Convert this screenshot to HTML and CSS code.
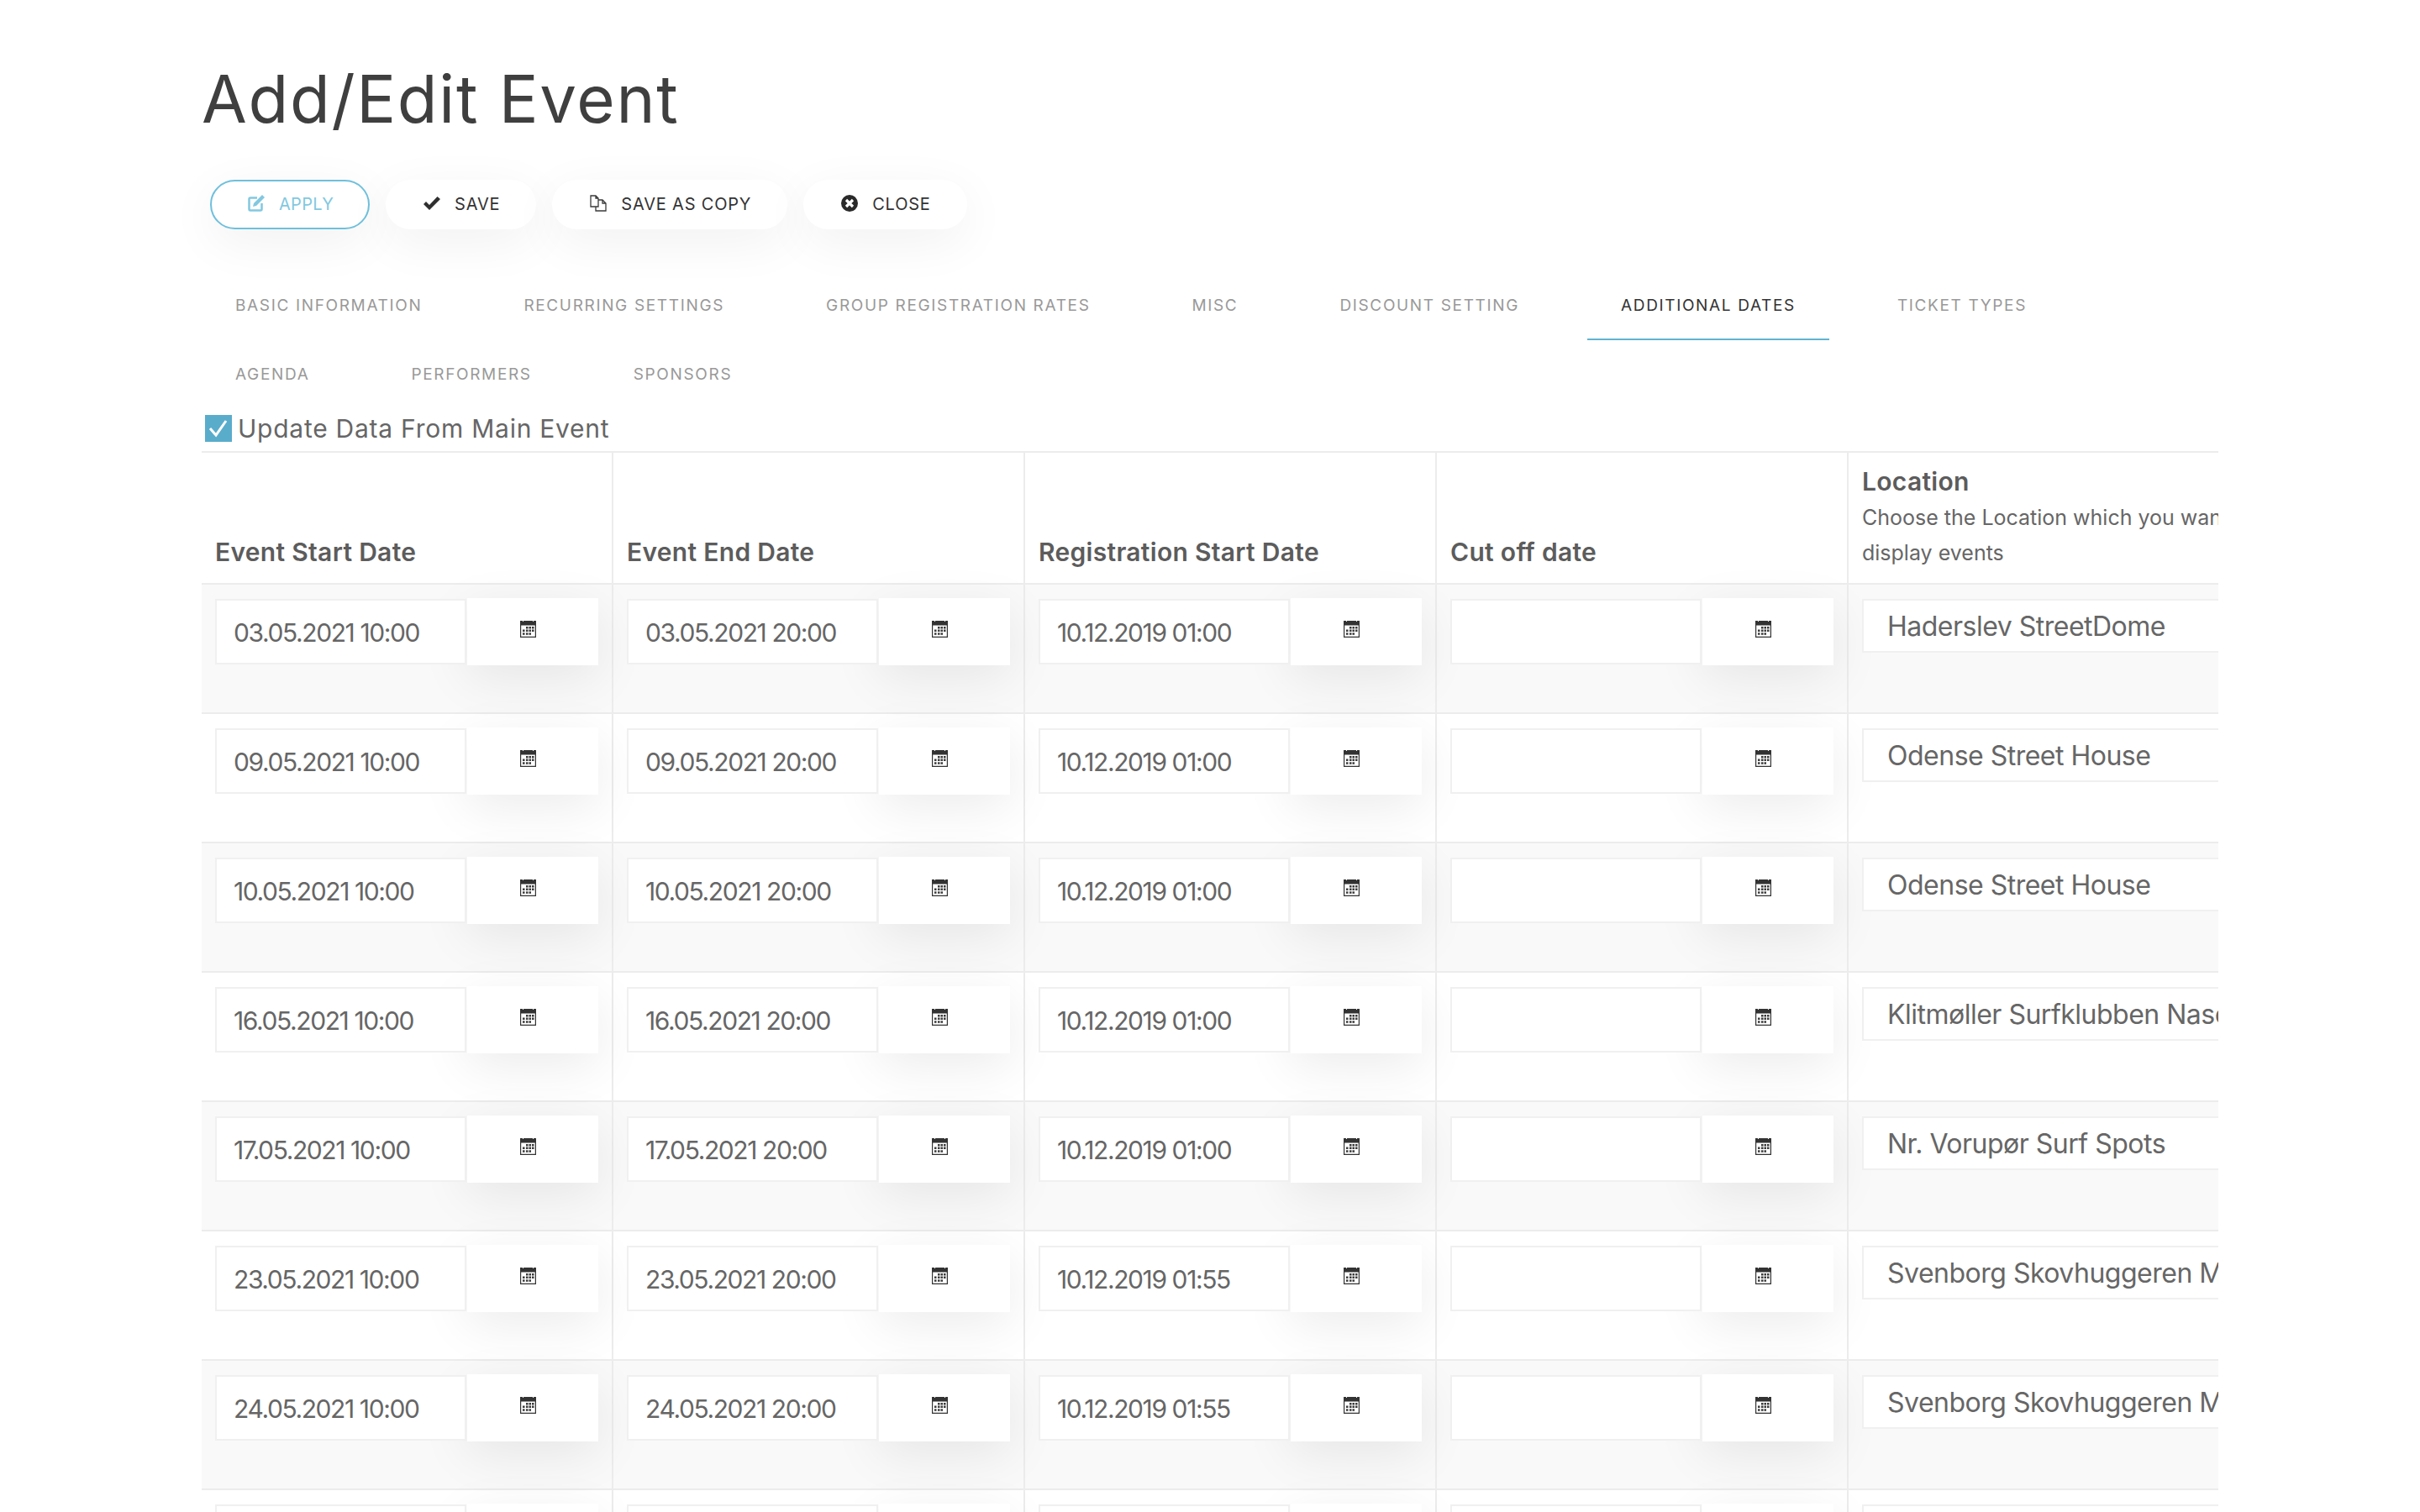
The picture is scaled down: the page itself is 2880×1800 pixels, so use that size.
FILE: index.html
```html
<!DOCTYPE html>
<html lang="en">
<head>
<meta charset="utf-8">
<title>Add/Edit Event</title>
<link rel="stylesheet" href="styles.css">
</head>
<body>
<svg class="defs" width="0" height="0" aria-hidden="true">
  <symbol id="cal" viewBox="0 0 19 21">
    <path fill="#333" fill-rule="evenodd" d="M0 1h3v1h1V1h11v1h1V1h3v20H0zM1.200 6.500v13.300h16.600V6.500z"/>
    <g fill="#3a3a3a"><rect x="7" y="8" width="2.500" height="2.500"/><rect x="10.500" y="8" width="2.500" height="2.500"/><rect x="14" y="8" width="2.500" height="2.500"/><rect x="3" y="11.500" width="2.500" height="2.500"/><rect x="7" y="11.500" width="2.500" height="2.500"/><rect x="10.500" y="11.500" width="2.500" height="2.500"/><rect x="14" y="11.500" width="2.500" height="2.500"/><rect x="3" y="15.300" width="2.500" height="2.500"/><rect x="7" y="15.300" width="2.500" height="2.500"/><rect x="10.500" y="15.300" width="2.500" height="2.500"/></g>
  </symbol>
</svg>
<main class="page">
  <h1 class="title">Add/Edit Event</h1>
  <div class="toolbar">
    <a class="btn btn-primary"><svg class="ico" viewBox="0 0 20 20"><path fill="none" stroke="currentColor" stroke-width="2.500" d="M11 3.500H3a1.500 1.500 0 0 0-1.500 1.500v12A1.500 1.500 0 0 0 3 18.500h12a1.500 1.500 0 0 0 1.500-1.500V10"/><path fill="currentColor" d="M17 0l3 3L10 13l-4 1 1-4z"/></svg>APPLY</a>
    <a class="btn"><svg class="ico" viewBox="0 0 20 16"><path fill="#2f2f2f" d="M0 9l3-3 4 4 9.500-10L20 3 7 16z"/></svg>SAVE</a>
    <a class="btn"><svg class="ico" viewBox="0 0 20 20"><path fill="none" stroke="#3a3a3a" stroke-width="1.300" d="M1 1h6l3 3v10H1zM7 1v3h3M10 6h5l4 4v9H7v-5M15 6v4h4"/></svg>SAVE AS COPY</a>
    <a class="btn"><svg class="ico" viewBox="0 0 20 20"><circle cx="10" cy="10" r="10" fill="#2a2a2a"/><path stroke="#fff" stroke-width="3.200" d="M6 6l8 8M14 6l-8 8"/></svg>CLOSE</a>
  </div>
  <nav class="tabs">
    <a class="tab">BASIC INFORMATION</a>
    <a class="tab">RECURRING SETTINGS</a>
    <a class="tab">GROUP REGISTRATION RATES</a>
    <a class="tab">MISC</a>
    <a class="tab">DISCOUNT SETTING</a>
    <a class="tab tab-active">ADDITIONAL DATES</a>
    <a class="tab">TICKET TYPES</a>
    <a class="tab">AGENDA</a>
    <a class="tab">PERFORMERS</a>
    <a class="tab">SPONSORS</a>
  </nav>
  <label class="check">
    <svg class="check-box" viewBox="0 0 32 32"><rect width="32" height="32" fill="#5aaccb"/><path fill="none" stroke="#fff" stroke-width="3" d="M6 16l7 8L25 7"/></svg>
    Update Data From Main Event
  </label>
  <div class="table-wrap">
    <div class="table">
      <div class="row head">
        <div class="cell"><span class="th">Event Start Date</span></div>
        <div class="cell"><span class="th">Event End Date</span></div>
        <div class="cell"><span class="th">Registration Start Date</span></div>
        <div class="cell"><span class="th">Cut off date</span></div>
        <div class="cell cell-loc"><span class="th">Location</span><span class="hint">Choose the Location which you want to display events</span></div>
      </div>
      <div class="row">
        <div class="cell"><div class="field"><div class="input">03.05.2021 10:00</div><div class="cal"><svg class="cal-ico"><use href="#cal"/></svg></div></div></div>
        <div class="cell"><div class="field"><div class="input">03.05.2021 20:00</div><div class="cal"><svg class="cal-ico"><use href="#cal"/></svg></div></div></div>
        <div class="cell"><div class="field"><div class="input">10.12.2019 01:00</div><div class="cal"><svg class="cal-ico"><use href="#cal"/></svg></div></div></div>
        <div class="cell"><div class="field"><div class="input"></div><div class="cal"><svg class="cal-ico"><use href="#cal"/></svg></div></div></div>
        <div class="cell cell-loc"><div class="select">Haderslev StreetDome</div></div>
      </div>
      <div class="row">
        <div class="cell"><div class="field"><div class="input">09.05.2021 10:00</div><div class="cal"><svg class="cal-ico"><use href="#cal"/></svg></div></div></div>
        <div class="cell"><div class="field"><div class="input">09.05.2021 20:00</div><div class="cal"><svg class="cal-ico"><use href="#cal"/></svg></div></div></div>
        <div class="cell"><div class="field"><div class="input">10.12.2019 01:00</div><div class="cal"><svg class="cal-ico"><use href="#cal"/></svg></div></div></div>
        <div class="cell"><div class="field"><div class="input"></div><div class="cal"><svg class="cal-ico"><use href="#cal"/></svg></div></div></div>
        <div class="cell cell-loc"><div class="select">Odense Street House</div></div>
      </div>
      <div class="row">
        <div class="cell"><div class="field"><div class="input">10.05.2021 10:00</div><div class="cal"><svg class="cal-ico"><use href="#cal"/></svg></div></div></div>
        <div class="cell"><div class="field"><div class="input">10.05.2021 20:00</div><div class="cal"><svg class="cal-ico"><use href="#cal"/></svg></div></div></div>
        <div class="cell"><div class="field"><div class="input">10.12.2019 01:00</div><div class="cal"><svg class="cal-ico"><use href="#cal"/></svg></div></div></div>
        <div class="cell"><div class="field"><div class="input"></div><div class="cal"><svg class="cal-ico"><use href="#cal"/></svg></div></div></div>
        <div class="cell cell-loc"><div class="select">Odense Street House</div></div>
      </div>
      <div class="row">
        <div class="cell"><div class="field"><div class="input">16.05.2021 10:00</div><div class="cal"><svg class="cal-ico"><use href="#cal"/></svg></div></div></div>
        <div class="cell"><div class="field"><div class="input">16.05.2021 20:00</div><div class="cal"><svg class="cal-ico"><use href="#cal"/></svg></div></div></div>
        <div class="cell"><div class="field"><div class="input">10.12.2019 01:00</div><div class="cal"><svg class="cal-ico"><use href="#cal"/></svg></div></div></div>
        <div class="cell"><div class="field"><div class="input"></div><div class="cal"><svg class="cal-ico"><use href="#cal"/></svg></div></div></div>
        <div class="cell cell-loc"><div class="select">Klitmøller Surfklubben Nasc</div></div>
      </div>
      <div class="row">
        <div class="cell"><div class="field"><div class="input">17.05.2021 10:00</div><div class="cal"><svg class="cal-ico"><use href="#cal"/></svg></div></div></div>
        <div class="cell"><div class="field"><div class="input">17.05.2021 20:00</div><div class="cal"><svg class="cal-ico"><use href="#cal"/></svg></div></div></div>
        <div class="cell"><div class="field"><div class="input">10.12.2019 01:00</div><div class="cal"><svg class="cal-ico"><use href="#cal"/></svg></div></div></div>
        <div class="cell"><div class="field"><div class="input"></div><div class="cal"><svg class="cal-ico"><use href="#cal"/></svg></div></div></div>
        <div class="cell cell-loc"><div class="select">Nr. Vorupør Surf Spots</div></div>
      </div>
      <div class="row">
        <div class="cell"><div class="field"><div class="input">23.05.2021 10:00</div><div class="cal"><svg class="cal-ico"><use href="#cal"/></svg></div></div></div>
        <div class="cell"><div class="field"><div class="input">23.05.2021 20:00</div><div class="cal"><svg class="cal-ico"><use href="#cal"/></svg></div></div></div>
        <div class="cell"><div class="field"><div class="input">10.12.2019 01:55</div><div class="cal"><svg class="cal-ico"><use href="#cal"/></svg></div></div></div>
        <div class="cell"><div class="field"><div class="input"></div><div class="cal"><svg class="cal-ico"><use href="#cal"/></svg></div></div></div>
        <div class="cell cell-loc"><div class="select">Svenborg Skovhuggeren M</div></div>
      </div>
      <div class="row">
        <div class="cell"><div class="field"><div class="input">24.05.2021 10:00</div><div class="cal"><svg class="cal-ico"><use href="#cal"/></svg></div></div></div>
        <div class="cell"><div class="field"><div class="input">24.05.2021 20:00</div><div class="cal"><svg class="cal-ico"><use href="#cal"/></svg></div></div></div>
        <div class="cell"><div class="field"><div class="input">10.12.2019 01:55</div><div class="cal"><svg class="cal-ico"><use href="#cal"/></svg></div></div></div>
        <div class="cell"><div class="field"><div class="input"></div><div class="cal"><svg class="cal-ico"><use href="#cal"/></svg></div></div></div>
        <div class="cell cell-loc"><div class="select">Svenborg Skovhuggeren M</div></div>
      </div>
      <div class="row">
        <div class="cell"><div class="field"><div class="input"></div><div class="cal"></div></div></div>
        <div class="cell"><div class="field"><div class="input"></div><div class="cal"></div></div></div>
        <div class="cell"><div class="field"><div class="input"></div><div class="cal"></div></div></div>
        <div class="cell"><div class="field"><div class="input"></div><div class="cal"></div></div></div>
        <div class="cell cell-loc"><div class="select"></div></div>
      </div>
    </div>
  </div>
</main>
</body>
</html>
```
FILE: styles.css
```css
html, body { margin: 0; height: 100%; overflow: hidden; background: #fff; }
body { font-family: Inter, "Noto Sans", "Liberation Sans", sans-serif; color: #666; }
.defs { position: absolute; }
.page { padding: 0 240px; }
.title { margin: 0; padding-top: 73px; height: 90px; font-size: 78px; line-height: 90px; font-weight: 400; color: #3f3f3f; letter-spacing: 1.700px; }
.toolbar { display: flex; gap: 19px; padding: 51px 0 0 10px; }
.btn { display: flex; align-items: center; gap: 17px; height: 59px; padding: 0 43px 2px 45px; box-sizing: border-box; border-radius: 30px; background: #fff; color: #333; font-size: 20px; letter-spacing: .8px; box-shadow: 0 15px 60px rgba(0,0,0,.06); }
.btn-primary { border: 2px solid #6fc0dc; color: #82c8e0; padding: 0 41px 2px 43px; letter-spacing: .3px; }
.ico { width: 20px; height: 20px; margin-top: -1px; }
.tabs { display: flex; flex-wrap: wrap; column-gap: 41px; width: 2400px; padding-top: 50px; box-sizing: border-box; }
.tab { height: 82px; line-height: 82px; padding: 0 40px; box-sizing: border-box; font-size: 19px; letter-spacing: 1.650px; color: #999; }
.tab-active { color: #333; border-bottom: 2px solid #5fb4d0; }
.check { display: flex; align-items: center; gap: 7px; height: 32px; padding: 7px 0 0 4px; font-size: 30px; letter-spacing: .75px; color: #666; }
.check-box { width: 32px; height: 32px; }
.table-wrap { width: 2400px; margin-top: 11px; overflow: hidden; }
.table { width: 2560px; border-top: 2px solid #ececec; }
.row { display: grid; grid-template-columns: repeat(4, 490px) 600px; height: 154px; border-bottom: 2px solid #ececec; box-sizing: border-box; }
.row:nth-child(even) { background: #f9f9f9; }
.head { height: 157px; }
.cell { border-right: 2px solid #ececec; padding: 17px 16px 0; box-sizing: border-box; }
.cell-loc { border-right: 0; }
.head .cell { display: flex; flex-direction: column; justify-content: flex-end; padding-bottom: 17px; }
.head .cell-loc { justify-content: flex-start; padding: 14px 16px 0; }
.th { font-size: 30px; line-height: 40px; font-weight: 600; color: #5c5c5c; letter-spacing: .3px; }
.hint { font-size: 25px; line-height: 42px; color: #666; display: block; width: 480px; margin-top: 2px; }
.field { display: flex; height: 78px; align-items: center; }
.input { position: relative; z-index: 1; width: 300px; height: 78px; box-sizing: border-box; border: 2px solid #f0f0f0; background: #fff; font-size: 30px; line-height: 76px; padding-left: 20px; color: #666; letter-spacing: -1.400px; }
.cal { width: 157px; height: 80px; margin-left: 1px; background: #fff; box-shadow: 0 15px 60px rgba(0,0,0,.08); position: relative; display: flex; align-items: center; justify-content: center; }
.cal-ico { width: 19px; height: 21px; margin: -7px 10px 0 0; }
.select { position: relative; z-index: 1; height: 64px; width: 560px; box-sizing: border-box; border: 2px solid #f0f0f0; background: #fff; font-size: 32px; line-height: 62px; padding-left: 28px; white-space: nowrap; color: #666; letter-spacing: -.5px; }
```
